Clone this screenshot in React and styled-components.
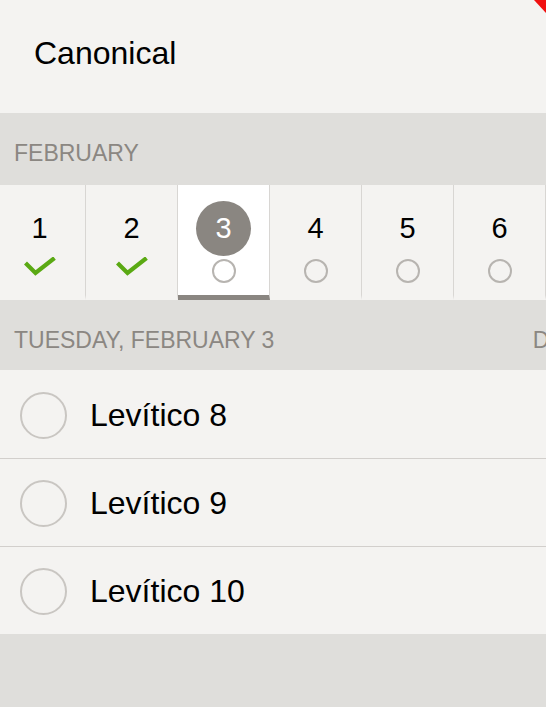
import React from 'react';
import styled, { createGlobalStyle } from 'styled-components';

const days = [
  { n: 1, done: true },
  { n: 2, done: true },
  { n: 3, active: true },
  { n: 4 },
  { n: 5 },
  { n: 6 },
];

const readings = ['Levítico 8', 'Levítico 9', 'Levítico 10'];

const CheckIcon = () => (
  <svg width="34" height="28" viewBox="0 0 34 28">
    <polyline points="2.5,6 12.5,16 31.5,1" fill="none" stroke="#5aa913" strokeWidth="4.2" />
  </svg>
);

const App = () => (
  <>
    <GlobalStyle />
    <Screen>
      <Corner width="12" height="14" viewBox="0 0 12 14">
        <polygon points="0,0 12,0 12,13" fill="#f01010" />
      </Corner>

      <Header>
        <Title>Canonical</Title>
      </Header>

      <MonthBar>
        <SectionLabel>FEBRUARY</SectionLabel>
      </MonthBar>

      <DayStrip>
        {days.map((d) => (
          <DayCell key={d.n} $active={d.active}>
            <DayNumber $active={d.active}>{d.n}</DayNumber>
            <Status>{d.done ? <CheckIcon /> : <SmallRing />}</Status>
          </DayCell>
        ))}
      </DayStrip>

      <DayHeader>
        <SectionLabel>TUESDAY, FEBRUARY 3</SectionLabel>
        <SideLabel>DAY 34</SideLabel>
      </DayHeader>

      <ReadingList>
        {readings.map((r) => (
          <ReadingRow key={r}>
            <Ring />
            <ReadingText>{r}</ReadingText>
          </ReadingRow>
        ))}
      </ReadingList>
    </Screen>
  </>
);

const GlobalStyle = createGlobalStyle`
  html, body {
    margin: 0;
    padding: 0;
    background: #dfdedb;
    overflow: hidden;
  }
  body {
    font-family: "Liberation Sans", Arial, sans-serif;
  }
`;

const Screen = styled.div`
  position: relative;
  width: 546px;
  height: 707px;
  overflow: hidden;
  background: #dfdedb;
`;

const Corner = styled.svg`
  position: absolute;
  top: 0;
  right: 0;
`;

const Header = styled.header`
  height: 113px;
  box-sizing: border-box;
  display: flex;
  align-items: center;
  padding: 0 34px 6px;
  background: #f4f3f1;
`;

const Title = styled.h1`
  margin: 0;
  font-size: 32px;
  font-weight: normal;
  color: #000;
`;

const MonthBar = styled.div`
  height: 72px;
  box-sizing: border-box;
  display: flex;
  align-items: center;
  padding: 9px 14px 0;
`;

const SectionLabel = styled.span`
  font-size: 23px;
  color: #8b8782;
  white-space: nowrap;
`;

const SideLabel = styled(SectionLabel)`
  margin-left: auto;
  margin-right: -78px;
`;

const DayStrip = styled.div`
  display: flex;
  height: 115px;
  margin-left: -6px;
  background: #f4f3f1;
`;

const DayCell = styled.div`
  flex: 0 0 92px;
  box-sizing: border-box;
  display: flex;
  flex-direction: column;
  align-items: center;
  padding-top: 16px;
  border-right: 1px solid #d8d6d3;
  border-bottom: 5px solid ${(p) => (p.$active ? '#8a8681' : 'transparent')};
  background: ${(p) => (p.$active ? '#ffffff' : '#f4f3f1')};
`;

const DayNumber = styled.div`
  width: 55px;
  height: 55px;
  border-radius: 50%;
  display: flex;
  align-items: center;
  justify-content: center;
  font-size: 29px;
  color: ${(p) => (p.$active ? '#ffffff' : '#000000')};
  background: ${(p) => (p.$active ? '#8a8681' : 'transparent')};
`;

const Status = styled.div`
  height: 24px;
  margin-top: 3px;
  display: flex;
  align-items: center;
  justify-content: center;
`;

const SmallRing = styled.div`
  width: 20px;
  height: 20px;
  border: 2px solid #b7b4b0;
  border-radius: 50%;
`;

const DayHeader = styled.div`
  height: 70px;
  box-sizing: border-box;
  display: flex;
  align-items: center;
  padding: 11px 14px 0;
`;

const ReadingList = styled.div`
  background: #f4f3f1;
`;

const ReadingRow = styled.div`
  height: 88px;
  box-sizing: border-box;
  display: flex;
  align-items: center;
  gap: 23px;
  padding: 2px 20px 0;

  & + & {
    border-top: 1px solid #d2cfcc;
  }
`;

const Ring = styled.div`
  width: 43px;
  height: 43px;
  flex-shrink: 0;
  border: 2px solid #c9c6c2;
  border-radius: 50%;
`;

const ReadingText = styled.span`
  font-size: 32px;
  color: #000;
`;

export default App;
